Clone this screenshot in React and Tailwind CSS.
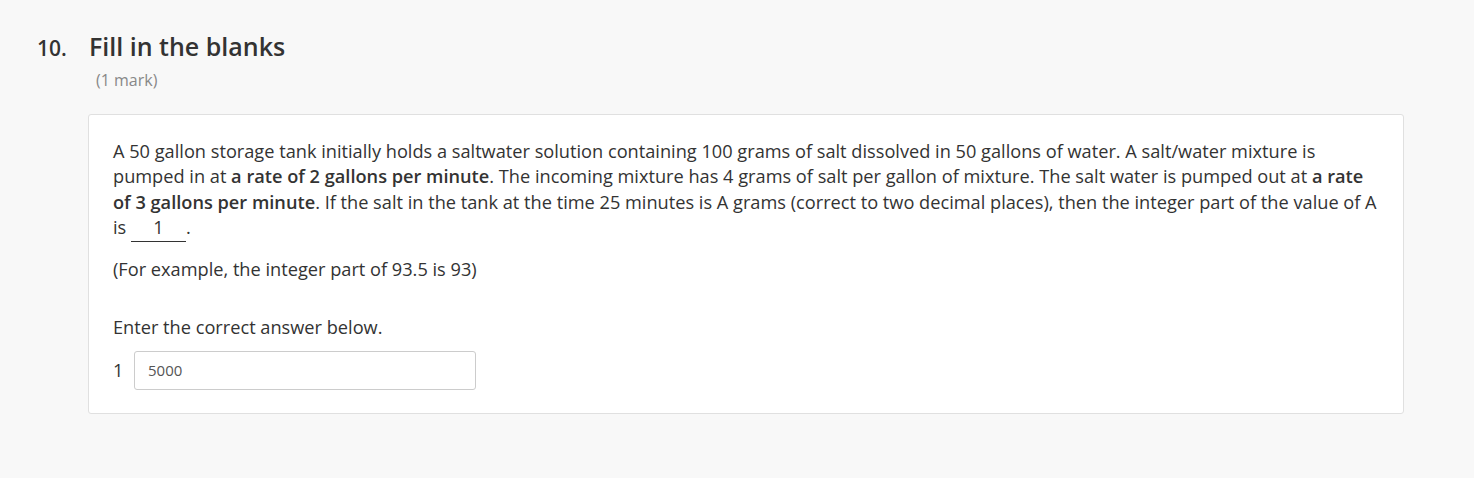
export default function App() {
  return (
    <div className="min-h-screen bg-[#f8f8f8] font-['Open_Sans',sans-serif] text-[#333]">
      <div className="pl-[37px] pr-[70px] pt-[30px]">
        {/* Question header */}
        <div className="flex items-baseline">
          <span className="w-[52px] text-[21px] font-semibold text-[#333]">10.</span>
          <h2 className="text-[25px] font-semibold leading-[32px] text-[#333]">Fill in the blanks</h2>
        </div>
        <div className="pl-[59px] pt-[3px] text-[16px] leading-[24px] text-[#888]">(1 mark)</div>

        {/* Card */}
        <div className="ml-[51px] mt-[22px] rounded-[3px] border border-[#e0e0e0] bg-white px-[24px] pb-[23px] pt-[24px] text-[18.2px] leading-[25.5px]">
          <p>
            A 50 gallon storage tank initially holds a saltwater solution containing 100 grams of salt dissolved in 50 gallons of water. A salt/water mixture is pumped in at <b className="font-semibold">a rate of 2 gallons per minute</b>. The incoming mixture has 4 grams of salt per gallon of mixture. The salt water is pumped out at <b className="font-semibold">a rate of 3 gallons per minute</b>. If the salt in the tank at the time 25 minutes is A grams (correct to two decimal places), then the integer part of the value of A is{' '}
            <span className="inline-block w-[55px] border-b border-[#333] pb-[3px] text-center leading-[22px]">1</span>.
          </p>
          <p className="mt-[15px]">(For example, the integer part of 93.5 is 93)</p>

          <p className="mt-[32px]">Enter the correct answer below.</p>
          <div className="mt-[11px] flex items-center">
            <span className="w-[21px]">1</span>
            <div className="flex h-[39px] w-[342px] items-center rounded-[3px] border border-[#ccc] bg-white px-[13px] text-[15px] text-[#555]">
              5000
            </div>
          </div>
        </div>
      </div>
    </div>
  );
}
